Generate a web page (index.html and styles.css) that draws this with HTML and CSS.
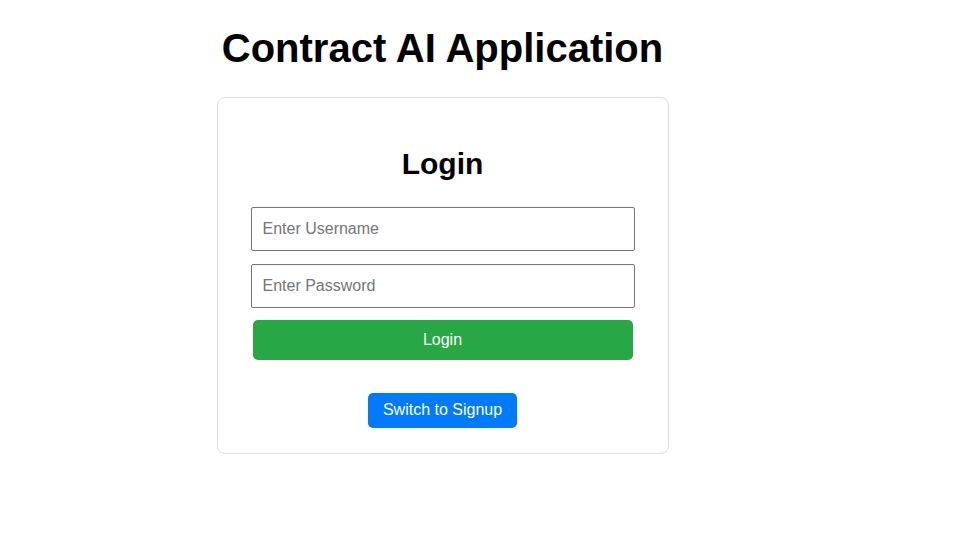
FILE: index.html
```html
<!DOCTYPE html>
<html lang="en">
<head>
<meta charset="utf-8">
<title>Contract AI Application</title>
<link rel="stylesheet" href="styles.css">
</head>
<body>
<div class="app">
  <h1 class="title">Contract AI Application</h1>
  <div class="card">
    <h2 class="card-title">Login</h2>
    <form class="form">
      <input class="field" type="text" placeholder="Enter Username">
      <input class="field" type="password" placeholder="Enter Password">
      <button class="btn btn-login" type="button">Login</button>
    </form>
    <button class="btn btn-switch" type="button">Switch to Signup</button>
  </div>
</div>
</body>
</html>
```
FILE: styles.css
```css
* { box-sizing: border-box; }
html, body { margin: 0; padding: 0; background: #fff; }
body {
  font-family: "Liberation Sans", Arial, sans-serif;
  color: #000;
}
.app {
  width: 869px;
  margin-left: 8px;
  display: flex;
  flex-direction: column;
  align-items: center;
  padding-top: 25px;
}
.title {
  margin: 0;
  font-size: 40px;
  font-weight: bold;
  line-height: 46px;
}
.card {
  margin-top: 26px;
  width: 452px;
  border: 1px solid #ddd;
  border-radius: 8px;
  padding: 49px 33px 25px;
  display: flex;
  flex-direction: column;
  align-items: center;
}
.card-title {
  margin: 0 0 26px;
  font-size: 30px;
  line-height: 34px;
  font-weight: bold;
}
.form {
  width: 100%;
  display: flex;
  flex-direction: column;
  align-items: stretch;
}
.field {
  width: 100%;
  height: 44px;
  margin: 0 0 13px;
  padding: 12px 11px;
  border: 1px solid #767676;
  border-radius: 2px;
  font-family: "Liberation Sans", Arial, sans-serif;
  font-size: 16px;
  color: #000;
  background: #fff;
}
.field + .field { margin-bottom: 12px; }
.field::placeholder { color: #757575; }
.btn {
  border: none;
  color: #fff;
  font-family: "Liberation Sans", Arial, sans-serif;
  font-size: 16px;
  cursor: pointer;
  border-radius: 5px;
}
.btn-login {
  margin: 0 2px;
  height: 40px;
  background: #28a745;
}
.btn-switch {
  margin-top: 33px;
  height: 35px;
  padding: 0 15px 2px;
  background: #007bff;
}
```
